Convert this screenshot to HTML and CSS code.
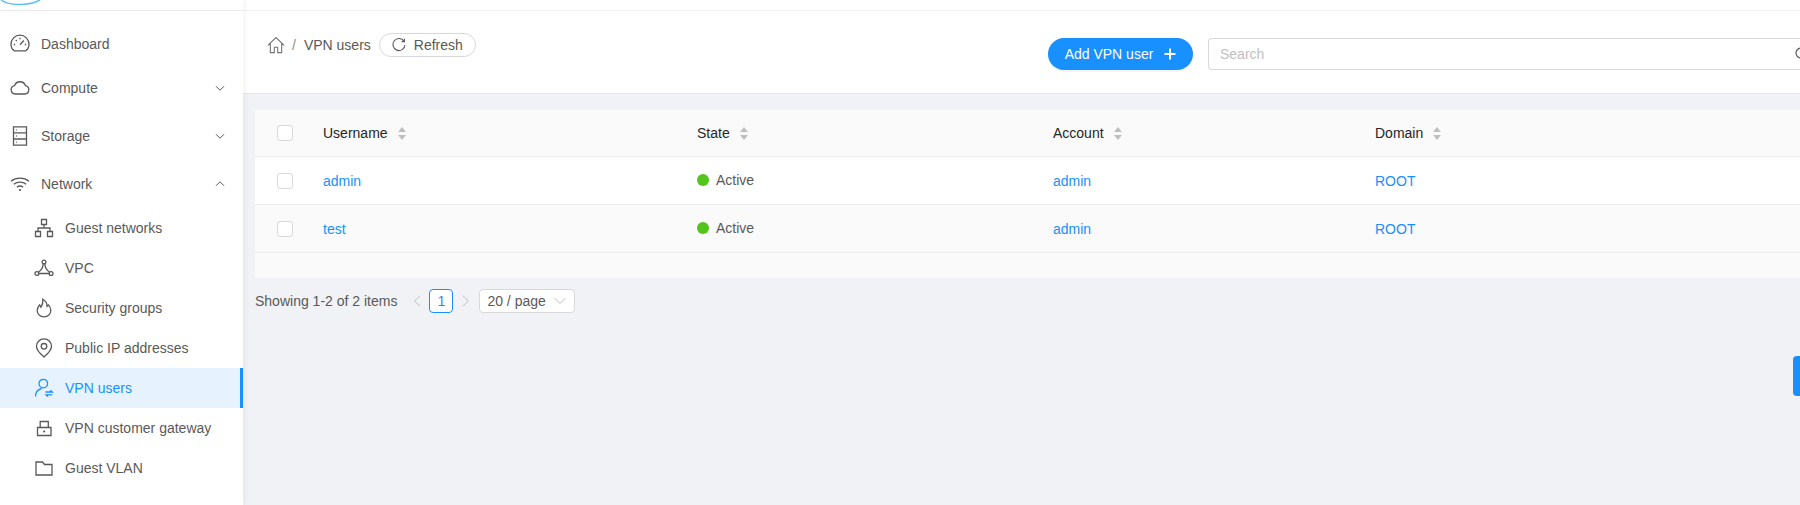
FILE: index.html
```html
<!DOCTYPE html>
<html lang="en">
<head>
<meta charset="utf-8">
<title>VPN users</title>
<link rel="stylesheet" href="styles.css">
</head>
<body>
<div class="page">
  <aside class="sidebar">
    <div class="logo">
      <svg class="logo-mark" width="44" height="10" viewBox="0 0 44 10"><path d="M1 0C8 5 26 7 40 0" fill="none" stroke="#5cc3ee" stroke-width="1.5"/></svg>
    </div>
    <nav class="menu">
      <a class="item item-dash">
        <svg class="ico" viewBox="0 0 20 20"><path d="M4.200 16.800C2.200 15.300 1 12.900 1 10.200a9 9 0 0 1 18 0c0 2.700-1.200 5.100-3.200 6.600z"/><path d="M10 10.800l3.800-4.300M3.800 10.500h1.400M14.800 10.500h1.400M5.800 6l1 1M10 3.800v1.400"/></svg>
        <span>Dashboard</span>
      </a>
      <a class="item item-compute">
        <svg class="ico" viewBox="0 0 20 20"><path d="M5.200 16a4.200 4.200 0 0 1-.7-8.300 5.800 5.800 0 0 1 11 0 4.200 4.200 0 0 1-.7 8.300z"/></svg>
        <span>Compute</span>
        <svg class="caret" viewBox="0 0 10 10"><path d="M1 3.200L5 7.200l4-4"/></svg>
      </a>
      <a class="item item-storage">
        <svg class="ico" viewBox="0 0 20 20"><path d="M3.500 .8h13v18.400h-13zM3.500 6.900h13M3.500 13h13M6 3.900h.8M6 10h.8M6 16.100h.8"/></svg>
        <span>Storage</span>
        <svg class="caret" viewBox="0 0 10 10"><path d="M1 3.200L5 7.200l4-4"/></svg>
      </a>
      <a class="item item-network">
        <svg class="ico" viewBox="0 0 20 20"><path d="M1 7.200c5-4 13-4 18 0M3.800 10.300c3.500-2.800 8.900-2.800 12.400 0M6.800 13.200c1.900-1.400 4.500-1.400 6.400 0"/><circle class="solid" cx="10" cy="16" r="1.100"/></svg>
        <span>Network</span>
        <svg class="caret" viewBox="0 0 10 10"><path d="M1 6.800L5 2.800l4 4"/></svg>
      </a>
      <a class="item sub">
        <svg class="ico" viewBox="0 0 20 20"><path d="M7.500 1.500h5v5h-5zM1.500 13.500h5v5h-5zM13.500 13.500h5v5h-5zM10 6.500v3.500M4 13.500V10h12v3.500"/></svg>
        <span>Guest networks</span>
      </a>
      <a class="item sub">
        <svg class="ico" viewBox="0 0 20 20"><circle cx="10" cy="4" r="1.900"/><circle cx="2.900" cy="15.500" r="1.900"/><circle cx="17.100" cy="15.500" r="1.900"/><path d="M4.800 15.500h10.400M9.200 5.800c-.2 3.500-2 6.800-5 8.400M10.800 5.800c.2 3.500 2 6.800 5 8.400"/></svg>
        <span>VPC</span>
      </a>
      <a class="item sub">
        <svg class="ico" viewBox="0 0 20 20"><path d="M10 18.800c-3.900 0-6.800-2.800-6.800-6.400 0-2.400 1.300-3.900 2.400-5.500l1.400 2.300C8.700 6.700 9.100 4 8.800 1.200c3 1.700 4.300 4.500 4.300 7l1.400-1.300c1.300 1.500 2.300 3.500 2.300 5.500 0 3.600-2.900 6.400-6.800 6.400z"/></svg>
        <span>Security groups</span>
      </a>
      <a class="item sub">
        <svg class="ico" viewBox="0 0 20 20"><path d="M10 19c-1-1-7.500-5.800-7.500-10.700a7.500 7.500 0 0 1 15 0C17.500 13.200 11 18 10 19z"/><circle cx="10" cy="8.300" r="2.800"/></svg>
        <span>Public IP addresses</span>
      </a>
      <a class="item sub active">
        <svg class="ico" viewBox="0 0 20 20"><circle cx="9.300" cy="5.600" r="4.300"/><path d="M1.500 18.500c0-4.300 2.400-7 6-8M11.500 14h6.800l-2-1.800M18.300 16.800h-6.300l2 1.800"/></svg>
        <span>VPN users</span>
      </a>
      <a class="item sub">
        <svg class="ico" viewBox="0 0 20 20"><path d="M3.500 9.500h13.500v8h-13.500zM6.200 9.500V3.500h8.100v6M3 9.500h14.500"/><circle class="solid" cx="10.200" cy="13.500" r="1.100"/></svg>
        <span>VPN customer gateway</span>
      </a>
      <a class="item sub">
        <svg class="ico" viewBox="0 0 20 20"><path d="M2 4h6.500l2 2.500H18v10.500H2z"/></svg>
        <span>Guest VLAN</span>
      </a>
    </nav>
  </aside>
  <main class="main">
    <div class="topbar"></div>
    <header class="toolbar">
      <div class="crumbs">
        <svg class="home" viewBox="0 0 18 18"><path d="M.8 9.300L9 1.600l8.200 7.700M3.300 7.300v9.300h4v-5.400h3.400v5.400h4V7.300"/></svg>
        <span class="sep">/</span>
        <span class="crumb">VPN users</span>
        <button class="refresh">
          <svg class="refresh-ico" viewBox="0 0 14 14"><path d="M12 3.200A6 6 0 1 0 13 7M12.400 .8v2.800H9.600"/></svg>
          <span>Refresh</span>
        </button>
      </div>
      <div class="actions">
        <button class="add">Add VPN user<svg class="plus" viewBox="0 0 12 12"><path d="M6 .5v11M.5 6h11"/></svg></button>
        <div class="search">
          <span class="placeholder">Search</span>
          <svg class="search-ico" viewBox="0 0 14 14"><circle cx="6" cy="6" r="5"/><path d="M10 10l3.500 3.500"/></svg>
        </div>
      </div>
    </header>
    <section class="content">
      <div class="table">
        <div class="row head">
          <div class="cell c-check"><i class="box"></i></div>
          <div class="cell c-user">Username<i class="sort"></i></div>
          <div class="cell c-state">State<i class="sort"></i></div>
          <div class="cell c-account">Account<i class="sort"></i></div>
          <div class="cell c-domain">Domain<i class="sort"></i></div>
        </div>
        <div class="row">
          <div class="cell c-check"><i class="box"></i></div>
          <div class="cell c-user"><a class="link">admin</a></div>
          <div class="cell c-state status"><i class="dot"></i>Active</div>
          <div class="cell c-account"><a class="link">admin</a></div>
          <div class="cell c-domain"><a class="link">ROOT</a></div>
        </div>
        <div class="row alt">
          <div class="cell c-check"><i class="box"></i></div>
          <div class="cell c-user"><a class="link">test</a></div>
          <div class="cell c-state status"><i class="dot"></i>Active</div>
          <div class="cell c-account"><a class="link">admin</a></div>
          <div class="cell c-domain"><a class="link">ROOT</a></div>
        </div>
        <div class="table-foot"></div>
      </div>
      <div class="pager">
        <span class="total">Showing 1-2 of 2 items</span>
        <svg class="arrow arrow-prev" viewBox="0 0 8 12"><path d="M7 .8L1.500 6 7 11.200"/></svg>
        <span class="page-num">1</span>
        <svg class="arrow arrow-next" viewBox="0 0 8 12"><path d="M1 .8L6.500 6 1 11.200"/></svg>
        <span class="size">20 / page<svg class="size-caret" viewBox="0 0 12 8"><path d="M.5 1L6 6.500 11.500 1"/></svg></span>
      </div>
    </section>
  </main>
  <div class="tab"></div>
</div>
</body>
</html>
```
FILE: styles.css
```css
* { box-sizing: border-box; }
html, body { margin: 0; height: 100%; overflow: hidden; }
body {
  font-family: "Liberation Sans", Arial, sans-serif;
  font-size: 14px;
  color: #595959;
  background: #f0f2f5;
}
.page { display: flex; height: 505px; width: 1800px; overflow: hidden; position: relative; }

.sidebar {
  width: 243px;
  flex: none;
  background: #fff;
  box-shadow: 2px 0 6px rgba(0, 21, 41, .05);
  position: relative;
  z-index: 2;
}
.logo { height: 11px; border-bottom: 1px solid #eaeaea; overflow: hidden; }
.logo-mark { display: block; }
.menu { padding-top: 13px; }
.item {
  display: flex;
  align-items: center;
  height: 40px;
  padding-left: 10px;
  padding-right: 18px;
  color: #595959;
}
.item span { margin-left: 11px; flex: 1; }
.item-compute { margin-top: 4px; }
.item-storage { margin-top: 8px; }
.item-network { margin-top: 8px; }
.item-network + .sub { margin-top: 4px; }
.ico {
  width: 20px;
  height: 20px;
  flex: none;
  fill: none;
  stroke: currentColor;
  stroke-width: 1.3;
}
.ico .solid { fill: currentColor; stroke: none; }
.caret { width: 10px; height: 10px; fill: none; stroke: currentColor; stroke-width: 1; flex: none; }
.sub { padding-left: 34px; }
.active {
  background: #e6f3ff;
  color: #1890ff;
  border-right: 3px solid #1890ff;
}

.main { flex: 1; min-width: 0; display: flex; flex-direction: column; }
.topbar { height: 11px; background: #fff; border-bottom: 1px solid #f3f3f3; flex: none; }
.toolbar {
  height: 83px;
  flex: none;
  background: #fff;
  border-bottom: 1px solid #e8e8e8;
  display: flex;
  justify-content: space-between;
  padding: 22px 0 0 24px;
}
.crumbs { display: flex; align-items: center; height: 24px; color: #595959; }
.home { width: 18px; height: 18px; fill: none; stroke: #737373; stroke-width: 1.100; }
.sep { margin: 0 8px 0 7px; color: #8c8c8c; }
.crumb { margin-right: 8px; }
.refresh {
  display: flex;
  align-items: center;
  height: 24px;
  width: 97px;
  padding: 0 0 0 12px;
  border: 1px solid #d9d9d9;
  border-radius: 12px;
  background: #fff;
  font: inherit;
  color: #595959;
}
.refresh-ico { width: 14px; height: 14px; fill: none; stroke: #595959; stroke-width: 1.100; margin-right: 8px; }
.actions { display: flex; align-items: flex-start; padding-top: 5px; margin-left: auto; }
.add {
  width: 145px;
  height: 32px;
  border: 0;
  border-radius: 16px;
  background: #1890ff;
  color: #fff;
  font: inherit;
  display: flex;
  align-items: center;
  justify-content: center;
  box-shadow: 0 2px 0 rgba(0, 0, 0, .035);
}
.plus { width: 12px; height: 12px; margin-left: 11px; fill: none; stroke: #fff; stroke-width: 2; }
.search {
  width: 592px;
  height: 32px;
  margin-left: 15px;
  border: 1px solid #d9d9d9;
  border-right: 0;
  border-radius: 4px 0 0 4px;
  background: #fff;
  display: flex;
  align-items: center;
  justify-content: space-between;
  padding-left: 11px;
  overflow: hidden;
}
.placeholder { color: #bfbfbf; }
.search-ico { width: 14px; height: 14px; flex: none; margin-right: -9px; fill: none; stroke: #595959; stroke-width: 1.200; }

.content { flex: 1; padding: 16px 0 0 12px; }
.table { background: #fafafa; }
.row { display: flex; height: 48px; align-items: center; background: #fff; border-bottom: 1px solid #ececec; }
.head { height: 47px; background: #fafafa; color: #262626; }
.alt { background: #fafafa; }
.cell { display: flex; align-items: center; flex: none; }
.c-check { width: 68px; padding-left: 22px; }
.c-user { width: 374px; }
.c-state { width: 356px; }
.c-account { width: 322px; }
.status { margin-bottom: 2px; }
.table-foot { height: 25px; }
.box { width: 16px; height: 16px; border: 1px solid #d9d9d9; border-radius: 3px; background: #fff; display: block; }
.sort { width: 8px; height: 13px; margin-left: 10px; position: relative; display: block; }
.sort::before, .sort::after {
  content: "";
  position: absolute;
  left: 0;
  border-left: 4px solid transparent;
  border-right: 4px solid transparent;
}
.sort::before { top: 0; border-bottom: 5px solid #bfbfbf; }
.sort::after { bottom: 0; border-top: 5px solid #bfbfbf; }
.link { color: #1890ff; }
.dot { width: 12px; height: 12px; border-radius: 50%; background: #52c41a; margin-right: 7px; display: block; }

.pager { display: flex; align-items: center; height: 24px; margin-top: 11px; }
.total { margin-right: 16px; }
.arrow { width: 8px; height: 12px; fill: none; stroke: #bfbfbf; stroke-width: 1; }
.arrow-prev { margin-right: 8px; }
.arrow-next { margin-left: 9px; }
.page-num {
  width: 24px;
  height: 24px;
  border: 1px solid #1890ff;
  border-radius: 4px;
  color: #1890ff;
  background: #fff;
  display: flex;
  align-items: center;
  justify-content: center;
}
.size {
  width: 96px;
  height: 24px;
  margin-left: 9px;
  border: 1px solid #d9d9d9;
  border-radius: 4px;
  background: #fff;
  display: flex;
  align-items: center;
  padding-left: 7px;
}
.size-caret { width: 12px; height: 8px; margin-left: 8px; fill: none; stroke: #bfbfbf; stroke-width: 1; }

.tab {
  position: absolute;
  right: 0;
  top: 356px;
  width: 7px;
  height: 40px;
  background: #1890ff;
  border-radius: 4px 0 0 4px;
}
```
